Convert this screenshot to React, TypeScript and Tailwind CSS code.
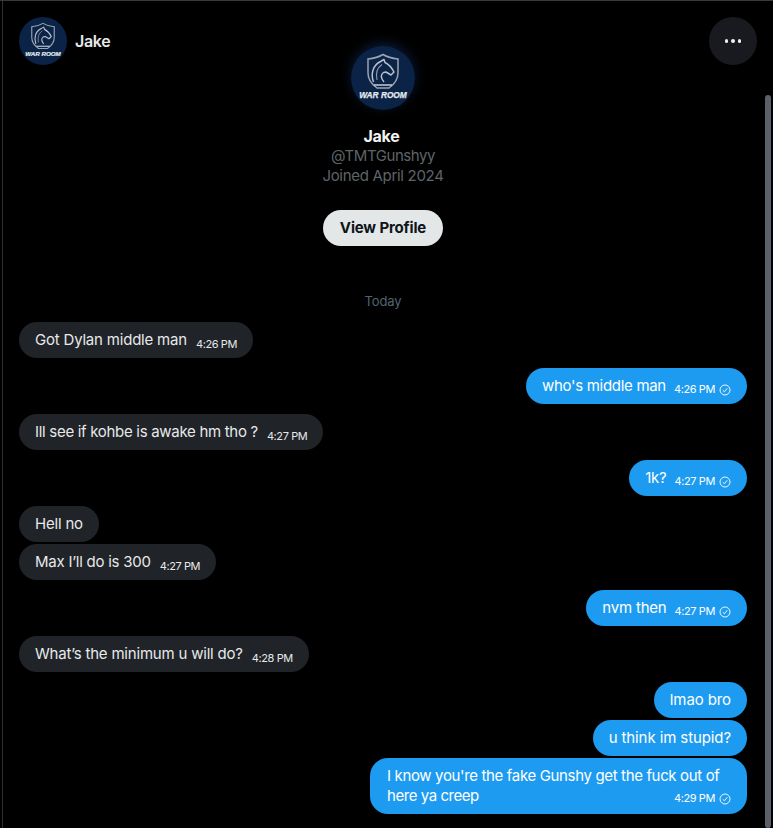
import React from "react";

function Logo({ size }: { size: number }) {
  return (
    <svg width={size} height={size} viewBox="0 0 64 64" className="block shrink-0">
      <circle cx="32" cy="32" r="32" fill="#0a2347" />
      <path d="M32 8.5 C27 11.5 22 12.5 17 13 L17 27 C17 33 21 38.5 26 42 L38 42 C43 38.5 47 33 47 27 L47 13 C42 12.5 37 11.5 32 8.5 Z" fill="none" stroke="#9aa4b2" strokeWidth="1.5" />
      <path d="M22.5 36 C19.5 28 22 19 29.5 15.5 L33 13.5 L34 16.5 C38 18.5 41 22 43 26 L40 29 L35 26 L32.5 26.5 C29.5 28.5 29.5 32 33 36" fill="none" stroke="#b8bfca" strokeWidth="1.5" strokeLinejoin="round" />
      <path d="M26 34 C24.5 27 26.5 21.5 31 18.5" fill="none" stroke="#8f99a8" strokeWidth="1.1" />
      <path d="M23 39 L41 39" stroke="#c6ccd4" strokeWidth="1.5" />
      <text x="32" y="51.5" textAnchor="middle" fontFamily="'Liberation Sans', sans-serif" fontStyle="italic" fontWeight="700" fontSize="8.3" stroke="#e8ebef" strokeWidth="0.25" fill="#e8ebef">WAR ROOM</text>
    </svg>
  );
}

function Check() {
  return (
    <svg width="12" height="12" viewBox="0 0 24 24" className="shrink-0 ml-[4px] mt-[2px]" fill="none" stroke="#eef7fe" strokeWidth="2">
      <circle cx="12" cy="12" r="10" />
      <path d="M7.5 12.5 L10.8 15.5 L16.5 8.5" />
    </svg>
  );
}

function In({ text, time, tr = "tracking-[-0.2px]", className = "mb-[10px]" }: { text: string; time?: string; tr?: string; className?: string }) {
  return (
    <div className={"self-start h-[36px] rounded-[18px] bg-[#202327] px-[16px] flex items-center text-[#e7e9ea] " + className}>
      <span className={"text-[15px] leading-[20px] " + tr}>{text}</span>
      {time && <span className="ml-[9px] text-[11px] leading-[14px] tracking-[-0.4px] mt-[7px] text-[#e7e9ea]">{time}</span>}
    </div>
  );
}

function Out({ text, time, tr = "tracking-[-0.2px]", className = "mb-[10px]" }: { text: string; time?: string; tr?: string; className?: string }) {
  return (
    <div className={"self-end h-[36px] rounded-[18px] bg-[#1d9bf0] px-[16px] flex items-center text-white " + className}>
      <span className={"text-[15px] leading-[20px] " + tr}>{text}</span>
      {time && (
        <span className="ml-[8px] flex items-center text-[11px] leading-[14px] tracking-[-0.4px] mt-[5px]">
          {time}
          <Check />
        </span>
      )}
    </div>
  );
}

export default function App() {
  return (
    <div className="relative w-[773px] h-[828px] overflow-hidden bg-black border-t border-[#3a3a3a] font-['Inter',sans-serif]">
      <div className="absolute left-[2px] top-0 bottom-0 w-px bg-[#2f2f2f]" />
      <div className="absolute right-[2px] top-[94px] bottom-0 w-[6px] rounded-full bg-[#5b6069]" />

      <div className="flex items-center justify-between h-[48px] mt-[16px] pl-[19px] pr-[16px]">
        <div className="flex items-center gap-[8px]">
          <Logo size={48} />
          <span className="text-[16px] font-semibold text-[#e7e9ea] tracking-[-0.3px]">Jake</span>
        </div>
        <div className="w-[48px] h-[48px] rounded-full bg-[#181a1f] flex items-center justify-center gap-[3px]">
          <span className="w-[3.5px] h-[3.5px] rounded-full bg-[#eff3f4]" />
          <span className="w-[3.5px] h-[3.5px] rounded-full bg-[#eff3f4]" />
          <span className="w-[3.5px] h-[3.5px] rounded-full bg-[#eff3f4]" />
        </div>
      </div>

      <div className="flex flex-col items-center -mt-[19px] pr-[7px]">
        <div className="rounded-full shadow-[0_-3px_12px_rgba(20,50,100,0.55)]">
          <Logo size={64} />
        </div>
        <div className="mt-[15px] mr-[3px] text-[16px] leading-[22px] font-bold text-[#eff3f4] tracking-[-0.25px]">Jake</div>
        <div className="text-[15px] leading-[20px] text-[#5f6468] tracking-[-0.45px] mt-[-1px]">@TMTGunshyy</div>
        <div className="text-[15px] leading-[20px] text-[#5f6468] tracking-[-0.3px]">Joined April 2024</div>
        <div className="mt-[24px] w-[120px] h-[36px] rounded-full bg-[#e4e7e8] flex items-center justify-center text-[15px] font-bold text-[#0f1419] tracking-[-0.15px]">
          View Profile
        </div>
        <div className="mt-[47px] text-[13px] leading-[16px] text-[#536471] tracking-[-0.15px]">Today</div>
      </div>

      <div className="flex flex-col mt-[13px] pl-[19px] pr-[26px]">
        <In text="Got Dylan middle man" time="4:26 PM" />
        <Out text="who's middle man" time="4:26 PM" tr="tracking-[-0.3px]" />
        <In text="Ill see if kohbe is awake hm tho ?" time="4:27 PM" tr="tracking-[-0.3px]" />
        <Out text="1k?" time="4:27 PM" />
        <In text="Hell no" className="mb-[2px]" />
        <In text="Max I’ll do is 300" time="4:27 PM" tr="tracking-[-0.25px]" />
        <Out text="nvm then" time="4:27 PM" />
        <In text="What’s the minimum u will do?" time="4:28 PM" />
        <Out text="lmao bro" className="mb-[2px]" tr="tracking-[-0.1px]" />
        <Out text="u think im stupid?" className="mb-[2px]" tr="tracking-[-0.1px]" />
        <div className="self-end w-[377px] h-[56px] rounded-[18px] bg-[#1d9bf0] pl-[17px] pr-[16px] pt-[8px] text-white">
          <div className="text-[15px] leading-[20px] tracking-[-0.35px] whitespace-nowrap">I know you're the fake Gunshy get the fuck out of</div>
          <div className="flex justify-between">
            <span className="text-[15px] leading-[20px] tracking-[-0.45px]">here ya creep</span>
            <span className="flex items-center text-[11px] leading-[14px] tracking-[-0.4px] mt-[4px]">
              4:29 PM
              <Check />
            </span>
          </div>
        </div>
      </div>
    </div>
  );
}
